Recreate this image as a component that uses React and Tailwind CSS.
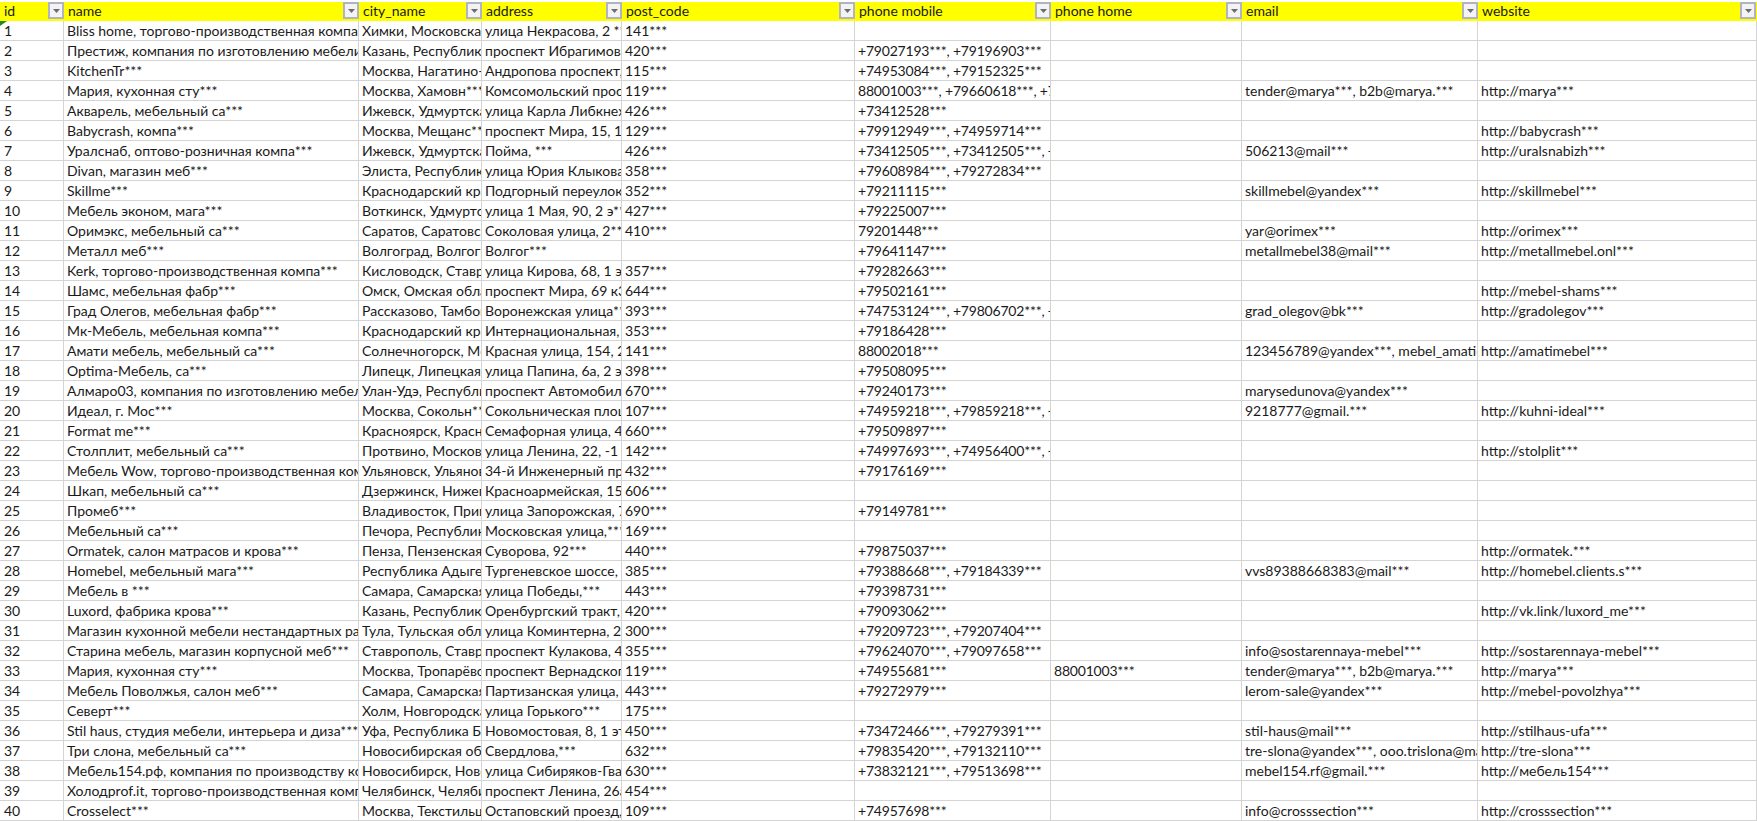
// spreadsheet of furniture companies, excel look
const headers = ['id', 'name', 'city_name', 'address', 'post_code', 'phone mobile', 'phone home', 'email', 'website']

// id is the row number, the rest is: name, city, address, post, mobile, home, email, website
const rows = [
  ['Bliss home, торгово-производственная компания', 'Химки, Московская область', 'улица Некрасова, 2 ***', '141***', '', '', '', ''],
  ['Престиж, компания по изготовлению мебели на заказ', 'Казань, Республика Татарстан', 'проспект Ибрагимова, 58', '420***', '+79027193***, +79196903***', '', '', ''],
  ['KitchenTr***', 'Москва, Нагатино-Садовники', 'Андропова проспект, 22', '115***', '+74953084***, +79152325***', '', '', ''],
  ['Мария, кухонная сту***', 'Москва, Хамовн***', 'Комсомольский проспект, 28', '119***', '88001003***, +79660618***, +74957771***', '', 'tender@marya***, b2b@marya.***', 'http://marya***'],
  ['Акварель, мебельный са***', 'Ижевск, Удмуртская Республика', 'улица Карла Либкнехта, 1', '426***', '+73412528***', '', '', ''],
  ['Babycrash, компа***', 'Москва, Мещанс***', 'проспект Мира, 15, 1 этаж', '129***', '+79912949***, +74959714***', '', '', 'http://babycrash***'],
  ['Уралснаб, оптово-розничная компа***', 'Ижевск, Удмуртская Республика', 'Пойма, ***', '426***', '+73412505***, +73412505***, +79120000***', '', '506213@mail***', 'http://uralsnabizh***'],
  ['Divan, магазин меб***', 'Элиста, Республика Калмыкия', 'улица Юрия Клыкова, 1', '358***', '+79608984***, +79272834***', '', '', ''],
  ['Skillme***', 'Краснодарский край', 'Подгорный переулок, 4', '352***', '+79211115***', '', 'skillmebel@yandex***', 'http://skillmebel***'],
  ['Мебель эконом, мага***', 'Воткинск, Удмуртская Республика', 'улица 1 Мая, 90, 2 э***', '427***', '+79225007***', '', '', ''],
  ['Оримэкс, мебельный са***', 'Саратов, Саратовская область', 'Соколовая улица, 2***', '410***', '79201448***', '', 'yar@orimex***', 'http://orimex***'],
  ['Металл меб***', 'Волгоград, Волгоградская область', 'Волгог***', '', '+79641147***', '', 'metallmebel38@mail***', 'http://metallmebel.onl***'],
  ['Kerk, торгово-производственная компа***', 'Кисловодск, Ставропольский край', 'улица Кирова, 68, 1 этаж', '357***', '+79282663***', '', '', ''],
  ['Шамс, мебельная фабр***', 'Омск, Омская область', 'проспект Мира, 69 к3, 1', '644***', '+79502161***', '', '', 'http://mebel-shams***'],
  ['Град Олегов, мебельная фабр***', 'Рассказово, Тамбовская область', 'Воронежская улица***', '393***', '+74753124***, +79806702***, +79000000***', '', 'grad_olegov@bk***', 'http://gradolegov***'],
  ['Мк-Мебель, мебельная компа***', 'Краснодарский край', 'Интернациональная, 5', '353***', '+79186428***', '', '', ''],
  ['Амати мебель, мебельный са***', 'Солнечногорск, Московская область', 'Красная улица, 154, 2 этаж', '141***', '88002018***', '', '123456789@yandex***, mebel_amati@mail', 'http://amatimebel***'],
  ['Optima-Мебель, са***', 'Липецк, Липецкая область', 'улица Папина, 6а, 2 этаж', '398***', '+79508095***', '', '', ''],
  ['Алмаро03, компания по изготовлению мебели на заказ', 'Улан-Удэ, Республика Бурятия', 'проспект Автомобилистов', '670***', '+79240173***', '', 'marysedunova@yandex***', ''],
  ['Идеал, г. Мос***', 'Москва, Сокольн***', 'Сокольническая площадь', '107***', '+74959218***, +79859218***, +79000000***', '', '9218777@gmail.***', 'http://kuhni-ideal***'],
  ['Format me***', 'Красноярск, Красноярский край', 'Семафорная улица, 4', '660***', '+79509897***', '', '', ''],
  ['Столплит, мебельный са***', 'Протвино, Московская область', 'улица Ленина, 22, -1 этаж', '142***', '+74997693***, +74956400***, +79000000***', '', '', 'http://stolplit***'],
  ['Мебель Wow, торгово-производственная компания', 'Ульяновск, Ульяновская область', '34-й Инженерный проезд', '432***', '+79176169***', '', '', ''],
  ['Шкап, мебельный са***', 'Дзержинск, Нижегородская область', 'Красноармейская, 156', '606***', '', '', '', ''],
  ['Промеб***', 'Владивосток, Приморский край', 'улица Запорожская, 7', '690***', '+79149781***', '', '', ''],
  ['Мебельный са***', 'Печора, Республика Коми', 'Московская улица,***', '169***', '', '', '', ''],
  ['Ormatek, салон матрасов и крова***', 'Пенза, Пензенская область', 'Суворова, 92***', '440***', '+79875037***', '', '', 'http://ormatek.***'],
  ['Homebel, мебельный мага***', 'Республика Адыгея', 'Тургеневское шоссе, ', '385***', '+79388668***, +79184339***', '', 'vvs89388668383@mail***', 'http://homebel.clients.s***'],
  ['Мебель в ***', 'Самара, Самарская область', 'улица Победы,***', '443***', '+79398731***', '', '', ''],
  ['Luxord, фабрика крова***', 'Казань, Республика Татарстан', 'Оренбургский тракт, ', '420***', '+79093062***', '', '', 'http://vk.link/luxord_me***'],
  ['Магазин кухонной мебели нестандартных размеров', 'Тула, Тульская область', 'улица Коминтерна, 24', '300***', '+79209723***, +79207404***', '', '', ''],
  ['Старина мебель, магазин корпусной меб***', 'Ставрополь, Ставропольский край', 'проспект Кулакова, 4, 1', '355***', '+79624070***, +79097658***', '', 'info@sostarennaya-mebel***', 'http://sostarennaya-mebel***'],
  ['Мария, кухонная сту***', 'Москва, Тропарёво-Никулино', 'проспект Вернадского, 8', '119***', '+74955681***', '88001003***', 'tender@marya***, b2b@marya.***', 'http://marya***'],
  ['Мебель Поволжья, салон меб***', 'Самара, Самарская область', 'Партизанская улица, 1', '443***', '+79272979***', '', 'lerom-sale@yandex***', 'http://mebel-povolzhya***'],
  ['Северт***', 'Холм, Новгородская область', 'улица Горького***', '175***', '', '', '', ''],
  ['Stil haus, студия мебели, интерьера и диза***', 'Уфа, Республика Башкортостан', 'Новомостовая, 8, 1 этаж', '450***', '+73472466***, +79279391***', '', 'stil-haus@mail***', 'http://stilhaus-ufa***'],
  ['Три слона, мебельный са***', 'Новосибирская область', 'Свердлова,***', '632***', '+79835420***, +79132110***', '', 'tre-slona@yandex***, ooo.trislona@mail', 'http://tre-slona***'],
  ['Мебель154.рф, компания по производству корпусной мебели', 'Новосибирск, Новосибирская область', 'улица Сибиряков-Гвардейцев', '630***', '+73832121***, +79513698***', '', 'mebel154.rf@gmail.***', 'http://мебель154***'],
  ['Холодprof.it, торгово-производственная компания', 'Челябинск, Челябинская область', 'проспект Ленина, 26а, 1', '454***', '', '', '', ''],
  ['Crosselect***', 'Москва, Текстильщики', 'Остаповский проезд, 5', '109***', '+74957698***', '', 'info@crosssection***', 'http://crosssection***'],
]

const columns = 'grid grid-cols-[64px_295px_123px_140px_233px_196px_191px_236px_1fr]'

function FilterButton() {
  return (
    <div className="absolute right-0 top-0 flex h-[17px] w-[16px] items-center justify-center border-2 border-[#b0b4c2] bg-[#f3f3f5]">
      <svg width="7" height="4" viewBox="0 0 7 4">
        <path d="M0 0h7L3.5 4z" fill="#6d6d6d" />
      </svg>
    </div>
  )
}

export default function App() {
  return (
    <div className="h-[821px] w-[1757px] overflow-hidden bg-white font-['Lato','Noto_Sans',sans-serif] text-[14px] text-[#1a1a1a]">
      <div className={`${columns} mt-[2px] h-[19px] bg-[#ffff00]`}>
        {headers.map((h) => (
          <div key={h} className="relative overflow-hidden whitespace-nowrap pl-[4px] leading-[17px] last:mr-[1px]">
            {h}
            <FilterButton />
          </div>
        ))}
      </div>

      {rows.map((row, i) => (
        <div key={i} className={`${columns} h-[20px]`}>
          <div className="relative overflow-hidden whitespace-nowrap border-b border-r border-[#d4d4d4] pl-[4px] leading-[20px]">
            {i + 1}
            {i === 0 && (
              <svg className="absolute left-0 top-0" width="7" height="5" viewBox="0 0 7 5">
                <path d="M0 0h7L0 5z" fill="#1f8a1f" />
              </svg>
            )}
          </div>
          {row.map((cell, j) => (
            <div
              key={j}
              className={`overflow-hidden whitespace-nowrap border-b border-r border-[#d4d4d4] pl-[3px] leading-[20px] ${j === 4 || j === 5 ? 'tracking-[-0.2px]' : ''}`}
            >
              {cell}
            </div>
          ))}
        </div>
      ))}
    </div>
  )
}
